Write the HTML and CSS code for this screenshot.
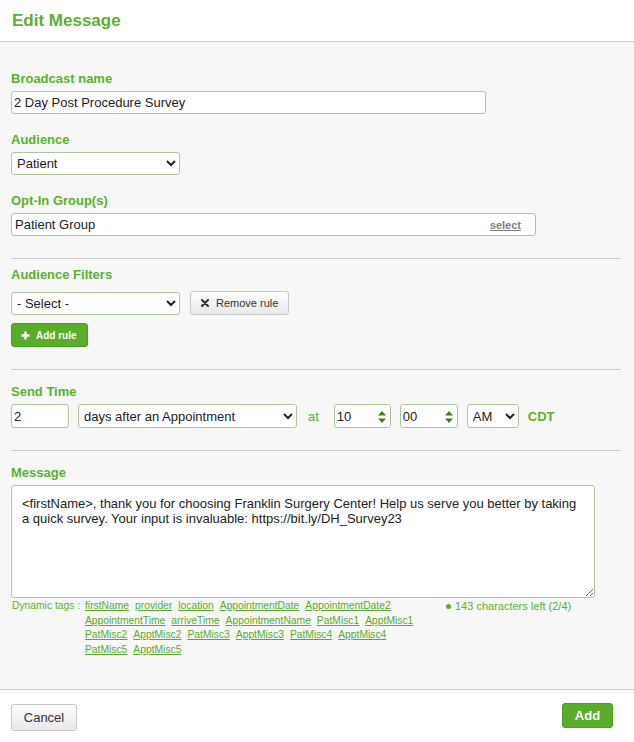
FILE: index.html
```html
<!DOCTYPE html>
<html lang="en">
  <head>
    <meta charset="UTF-8" />
    <meta name="viewport" content="width=device-width, initial-scale=1.0" />
    <title>Edit Message</title>
    <link rel="stylesheet" href="styles.css">
  </head>
  <body>
    <div class="modal">
      <div class="modal-header">
        <h2 class="modal-title">Edit Message</h2>
      </div>

      <div class="modal-body">
        <div class="field">
          <label class="field-label" for="name">Broadcast name</label>
          <input type="text" id="name" class="text-input name-input" value="2 Day Post Procedure Survey" />
        </div>

        <div class="field">
          <label class="field-label" for="audience">Audience</label>
          <select id="audience" class="select-input audience-select">
            <option>Patient</option>
            <option>Provider</option>
          </select>
        </div>

        <div class="field">
          <label class="field-label">Opt-In Group(s)</label>
          <div class="picker">
            <span class="picker-value">Patient Group</span>
            <a href="#" class="picker-link">select</a>
          </div>
        </div>

        <hr class="divider" />

        <div class="section section-filters">
          <label class="field-label filters-label">Audience Filters</label>
          <div class="filter-row">
            <select class="select-input audience-select">
              <option>- Select -</option>
            </select>
            <button class="btn btn-default btn-small">
              <svg class="btn-icon" width="8" height="8" viewBox="0 0 8 8">
                <path d="M1 1 L7 7 M7 1 L1 7" stroke="#333" stroke-width="2" stroke-linecap="round" />
              </svg>
              Remove rule
            </button>
          </div>
          <button class="btn btn-green btn-small add-rule">
            <svg class="btn-icon" width="9" height="9" viewBox="0 0 9 9">
              <path d="M4.5 0.5 V8.5 M0.5 4.5 H8.5" stroke="#fff" stroke-width="2.4" />
            </svg>
            Add rule
          </button>
        </div>

        <hr class="divider" />

        <div class="section">
          <label class="field-label">Send Time</label>
          <div class="send-row">
            <input type="text" class="text-input offset-input" value="2" />
            <select class="select-input trigger-select">
              <option>days after an Appointment</option>
              <option>days before an Appointment</option>
            </select>
            <span class="send-at">at</span>
            <div class="spin">
              <input type="number" class="text-input spin-input" value="10" />
              <svg class="spin-arrows" width="8" height="12" viewBox="0 0 8 12">
                <polygon points="0,4.5 4,0 8,4.5" />
                <polygon points="0,7.5 8,7.5 4,12" />
              </svg>
            </div>
            <div class="spin">
              <input type="text" class="text-input spin-input minutes" value="00" />
              <svg class="spin-arrows" width="8" height="12" viewBox="0 0 8 12">
                <polygon points="0,4.5 4,0 8,4.5" />
                <polygon points="0,7.5 8,7.5 4,12" />
              </svg>
            </div>
            <select class="select-input ampm-select">
              <option>AM</option>
              <option>PM</option>
            </select>
            <span class="send-zone">CDT</span>
          </div>
        </div>

        <hr class="divider" />

        <div class="section">
          <label class="field-label" for="message">Message</label>
          <textarea id="message" class="message-input">&lt;firstName&gt;, thank you for choosing Franklin Surgery Center! Help us serve you better by taking a quick survey. Your input is invaluable: https://bit.ly/DH_Survey23</textarea>
          <div class="tags-row">
            <span class="tags-label">Dynamic tags :</span>
            <div class="tag-list">
              <a href="#">firstName</a>
              <a href="#">provider</a>
              <a href="#">location</a>
              <a href="#">AppointmentDate</a>
              <a href="#">AppointmentDate2</a>
              <a href="#">AppointmentTime</a>
              <a href="#">arriveTime</a>
              <a href="#">AppointmentName</a>
              <a href="#">PatMisc1</a>
              <a href="#">ApptMisc1</a>
              <a href="#">PatMisc2</a>
              <a href="#">ApptMisc2</a>
              <a href="#">PatMisc3</a>
              <a href="#">ApptMisc3</a>
              <a href="#">PatMisc4</a>
              <a href="#">ApptMisc4</a>
              <a href="#">PatMisc5</a>
              <a href="#">ApptMisc5</a>
            </div>
            <span class="counter"><span class="counter-dot"></span>143 characters left (2/4)</span>
          </div>
        </div>
      </div>

      <div class="modal-footer">
        <button class="btn btn-default btn-cancel">Cancel</button>
        <button class="btn btn-green btn-add">Add</button>
      </div>
    </div>
  </body>
</html>
```

FILE: styles.css
```css
body {
  margin: 0;
  font-family: "Liberation Sans", Arial, sans-serif;
  color: #222;
  background-color: #fff;
}
.modal {
  display: flex;
  flex-direction: column;
  height: 742px;
}
.modal-header {
  height: 41px;
  padding: 0 12px;
  border-bottom: 1px solid #ccc;
  background-color: #fff;
}
.modal-title {
  margin: 0;
  font-size: 17px;
  line-height: 41px;
  font-weight: bold;
  color: #5cb030;
}
.modal-body {
  flex: 1;
  padding: 29px 13px 0 11px;
  background-color: #f7f7f7;
}
.field {
  margin-bottom: 18px;
}
.field:last-of-type {
  margin-bottom: 0;
}
.field-label {
  display: block;
  margin-bottom: 5px;
  font-size: 13px;
  line-height: 15px;
  font-weight: bold;
  color: #5cb030;
}
.filters-label {
  margin-bottom: 9px;
}
.text-input,
.select-input {
  box-sizing: border-box;
  height: 23px;
  border: 1px solid #afc69b;
  border-radius: 3px;
  background-color: #fff;
  font-family: inherit;
  font-size: 13px;
  color: #222;
  margin: 0;
}
.text-input {
  padding: 0 2px;
  outline: none;
}
.select-input {
  padding: 0 1px;
}
.name-input {
  display: block;
  width: 475px;
}
.audience-select {
  display: block;
  width: 169px;
}
.picker {
  box-sizing: border-box;
  display: flex;
  align-items: center;
  justify-content: space-between;
  width: 525px;
  height: 23px;
  padding: 0 14px 0 3px;
  border: 1px solid #afc69b;
  border-radius: 3px;
  background-color: #fff;
  font-size: 13px;
}
.picker-link {
  font-size: 11px;
  font-weight: bold;
  color: #808080;
}
.divider {
  margin: 22px 0 0;
  border: none;
  border-top: 1px solid #ccc;
}
.section {
  padding-top: 14px;
}
.section-filters {
  padding-top: 8px;
}
.filter-row {
  display: flex;
  align-items: center;
  gap: 10px;
}
.btn {
  box-sizing: border-box;
  display: inline-flex;
  align-items: center;
  justify-content: center;
  gap: 7px;
  border-radius: 3px;
  font-family: inherit;
  cursor: pointer;
}
.btn-default {
  border: 1px solid #c8c8c8;
  background: linear-gradient(#fdfdfd, #e9e9e9);
  color: #333;
}
.btn-green {
  border: 1px solid #4c9c23;
  background-color: #5aac2b;
  color: #fff;
  font-weight: bold;
}
.btn-small {
  height: 24px;
  padding: 0 10px;
  font-size: 11px;
}
.btn-icon {
  display: block;
}
.add-rule {
  width: 77px;
  margin-top: 8px;
  padding: 0 9px;
  font-size: 10px;
  gap: 6px;
  justify-content: flex-start;
}
.send-row {
  display: flex;
  align-items: center;
  gap: 9px;
}
.send-row .text-input,
.send-row .select-input {
  height: 24px;
}
.offset-input {
  width: 58px;
}
.trigger-select {
  width: 219px;
}
.send-at {
  margin: 0 6px 0 2px;
  font-size: 13px;
  color: #5cb030;
}
.spin {
  position: relative;
}
.spin-input {
  display: block;
  width: 57px;
}
.spin-input.minutes {
  width: 58px;
}
.spin-input::-webkit-inner-spin-button,
.spin-input::-webkit-outer-spin-button {
  -webkit-appearance: none;
  margin: 0;
}
.spin-input[type="number"] {
  -moz-appearance: textfield;
}
.spin-arrows {
  position: absolute;
  top: 7px;
  right: 5px;
  fill: #3f7f1f;
}
.ampm-select {
  width: 52px;
}
.send-zone {
  font-size: 13px;
  font-weight: bold;
  color: #5cb030;
}
.message-input {
  box-sizing: border-box;
  display: block;
  width: 584px;
  height: 113px;
  margin: 0;
  padding: 10px;
  border: 1px solid #afc69b;
  border-radius: 3px;
  background-color: #fff;
  font-family: inherit;
  font-size: 13px;
  line-height: 15px;
  color: #222;
  outline: none;
}
.tags-row {
  display: flex;
  align-items: flex-start;
  margin-top: 1px;
  font-size: 10.3px;
  line-height: 14.5px;
  color: #5cb030;
}
.tags-label {
  width: 73px;
  padding-left: 1px;
}
.tag-list {
  display: flex;
  flex-wrap: wrap;
  column-gap: 6px;
  width: 336px;
}
.tag-list a {
  color: #5aab2b;
}
.counter {
  display: flex;
  align-items: center;
  margin-left: 25px;
  font-size: 11px;
  color: #5cb030;
}
.counter-dot {
  width: 5px;
  height: 5px;
  margin-right: 4px;
  border-radius: 50%;
  background-color: #5cb030;
}
.modal-footer {
  display: flex;
  align-items: flex-start;
  justify-content: space-between;
  height: 53px;
  box-sizing: border-box;
  padding: 13px 21px 0 11px;
  border-top: 1px solid #ccc;
  background-color: #fff;
}
.btn-cancel {
  width: 66px;
  height: 27px;
  margin-top: 1px;
  font-size: 13px;
}
.btn-add {
  width: 51px;
  height: 25px;
  font-size: 13px;
}
```
